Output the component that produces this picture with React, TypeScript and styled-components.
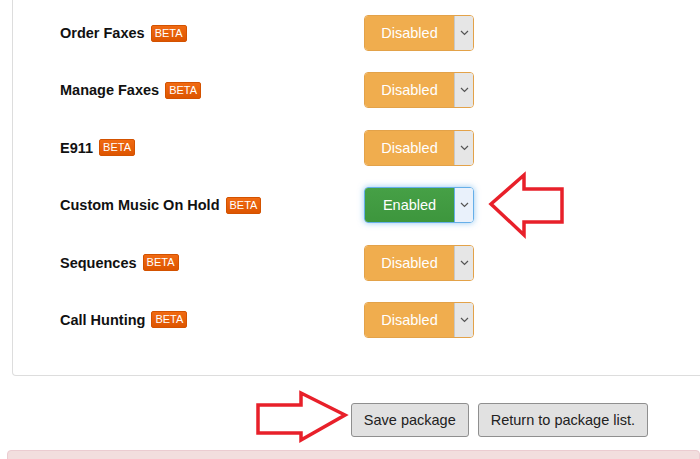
import React from "react";
import styled, { createGlobalStyle } from "styled-components";

const GlobalStyle = createGlobalStyle`
  html, body {
    margin: 0;
    padding: 0;
    background: #ffffff;
    overflow: hidden;
    font-family: "Liberation Sans", Arial, sans-serif;
  }
`;

const Page = styled.div`
  position: relative;
  width: 700px;
  height: 459px;
  overflow: hidden;
`;

const Panel = styled.div`
  margin-left: 12px;
  width: 720px;
  border: 1px solid #dddddd;
  border-top: none;
  border-radius: 0 0 4px 4px;
  padding: 15px 0 37px 47px;
  box-sizing: border-box;
  display: grid;
  grid-template-columns: 304px auto;
  row-gap: 21.4px;
  align-items: center;
`;

const Label = styled.div`
  display: flex;
  align-items: center;
  gap: 6px;
  font-size: 14.5px;
  font-weight: bold;
  color: #111111;
`;

const Beta = styled.span`
  display: inline-block;
  padding: 1px 3px 2px;
  font-size: 11px;
  font-weight: normal;
  line-height: 12px;
  color: #ffffff;
  border-radius: 2px;
  background: linear-gradient(#f06a12, #dd5500);
  border: 1px solid #d35200;
`;

const Select = styled.div<{ $on: boolean }>`
  display: flex;
  width: 110px;
  height: 36px;
  box-sizing: border-box;
  border-radius: 4px;
  border: 1px solid ${(p) => (p.$on ? "#66afe9" : "#e3a249")};
  box-shadow: ${(p) => (p.$on ? "0 0 6px rgba(102,175,233,0.7)" : "none")};
  overflow: hidden;
`;

const Value = styled.div<{ $on: boolean }>`
  flex: 1;
  display: flex;
  align-items: center;
  justify-content: center;
  font-size: 14.5px;
  color: #ffffff;
  background: ${(p) => (p.$on ? "linear-gradient(#46a046, #3d963d)" : "#f0ad4e")};
`;

const Caret = styled.div<{ $on: boolean }>`
  width: 18px;
  display: flex;
  align-items: center;
  justify-content: center;
  border-left: 1px solid ${(p) => (p.$on ? "#66afe9" : "#c8c8c8")};
  background: ${(p) => (p.$on ? "#e9f1fb" : "#e6e6e6")};
`;

const Actions = styled.div`
  display: flex;
  justify-content: flex-end;
  gap: 9px;
  padding: 27px 52px 0 0;
`;

const Button = styled.button`
  height: 34px;
  padding: 0 12px;
  font-family: "Liberation Sans", Arial, sans-serif;
  font-size: 14.5px;
  color: #222222;
  background: #e1e1e1;
  border: 1px solid #8f8f8f;
  border-radius: 3px;
`;

const Alert = styled.div`
  margin: 13px 0 0 7px;
  height: 30px;
  background: #f2dede;
  border: 1px solid #ebccd1;
  border-radius: 4px;
`;

const Annotation = styled.svg`
  position: absolute;
  left: 0;
  top: 0;
  pointer-events: none;
`;

const rows = [
  { name: "Order Faxes", on: false },
  { name: "Manage Faxes", on: false },
  { name: "E911", on: false },
  { name: "Custom Music On Hold", on: true },
  { name: "Sequences", on: false },
  { name: "Call Hunting", on: false },
];

const ChevronDown = () => (
  <svg width="9" height="6" viewBox="0 0 9 6">
    <path d="M1 1 L4.5 4.5 L8 1" fill="none" stroke="#555" strokeWidth="1.2" />
  </svg>
);

export default function App() {
  return (
    <Page>
      <GlobalStyle />
      <Panel>
        {rows.map((r) => (
          <React.Fragment key={r.name}>
            <Label>
              {r.name}
              <Beta>BETA</Beta>
            </Label>
            <Select $on={r.on}>
              <Value $on={r.on}>{r.on ? "Enabled" : "Disabled"}</Value>
              <Caret $on={r.on}>
                <ChevronDown />
              </Caret>
            </Select>
          </React.Fragment>
        ))}
      </Panel>
      <Actions>
        <Button>Save package</Button>
        <Button>Return to package list.</Button>
      </Actions>
      <Alert />
      <Annotation width="700" height="459">
        <polygon
          points="491,204 524,175 524,189 562,189 562,222 524,222 524,235"
          fill="none"
          stroke="#e8202a"
          strokeWidth="3.5"
          strokeLinejoin="miter"
        />
        <polygon
          points="345,415 301,393 301,405 258,405 258,433 301,433 301,440"
          fill="none"
          stroke="#e8202a"
          strokeWidth="3.5"
          strokeLinejoin="miter"
        />
      </Annotation>
    </Page>
  );
}
